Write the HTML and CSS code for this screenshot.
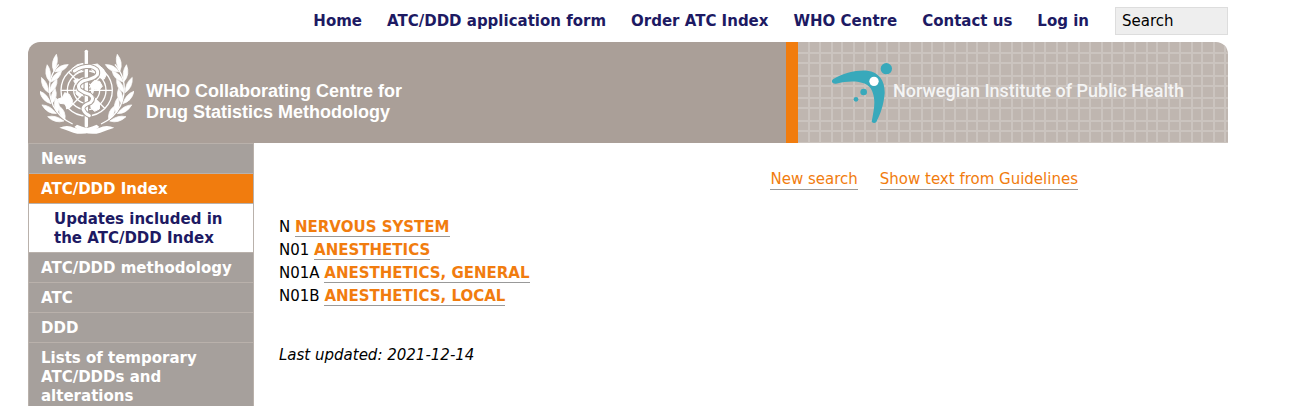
FILE: index.html
```html
<!DOCTYPE html>
<html lang="en">
<head>
<meta charset="utf-8">
<title>ATC/DDD Index</title>
<link rel="stylesheet" href="styles.css">
</head>
<body>
<div class="page">
  <div class="topbar">
    <nav class="topnav" aria-label="Main">
      <a href="#">Home</a>
      <a href="#">ATC/DDD application form</a>
      <a href="#">Order ATC Index</a>
      <a href="#">WHO Centre</a>
      <a href="#">Contact us</a>
      <a href="#">Log in</a>
    </nav>
    <input class="search" type="text" value="Search" aria-label="Search">
  </div>

  <header class="banner">
    <div class="banner-who">
      <svg class="emblem" viewBox="60 36 282 264" fill="none" stroke="#fff" aria-hidden="true">
        <defs>
          <g id="leaf" fill="#fff" stroke="#fff" stroke-width="2">
            <path d="M86 174Q62 160 63 129Q84 143 86 174Z"/>
            <path d="M90 174Q88 148 110 133Q113 160 90 174Z"/>
          </g>
          <g id="branch">
            <use href="#leaf" transform="rotate(36 200 163)"/>
            <use href="#leaf" transform="rotate(19 200 163)"/>
            <use href="#leaf" transform="rotate(2 200 163)"/>
            <use href="#leaf" transform="rotate(-15 200 163)"/>
            <use href="#leaf" transform="rotate(-32 200 163)"/>
            <use href="#leaf" transform="rotate(-48 200 163)"/>
            <path d="M116 85Q70 140 100 210Q118 246 158 264" stroke-width="4"/>
            <path d="M118 275Q142 264 164 276Q190 284 230 266L238 273Q200 302 160 290Q140 282 118 275Z" fill="#fff" stroke="none"/>
          </g>
        </defs>
        <use href="#branch"/>
        <use href="#branch" transform="matrix(-1 0 0 1 401 0)"/>
        <g stroke-width="4">
          <circle cx="200" cy="163" r="77"/>
          <circle cx="200" cy="163" r="58"/>
          <circle cx="200" cy="163" r="39"/>
          <circle cx="200" cy="163" r="20"/>
          <path d="M123 163H277M146 109L254 217M254 109L146 217"/>
        </g>
        <g fill="#fff" stroke-width="3">
          <path d="M156 98L172 86L190 82V94L183 106L166 112L155 106Z"/>
          <path d="M161 134L171 128L185 134L192 152L184 160L177 149L168 146Z"/>
          <path d="M112 190L128 184L134 170L148 175L158 194L151 212L140 219L137 204L119 202Z"/>
          <path d="M169 158L185 156L188 172L180 184L168 174Z"/>
          <path d="M212 145L222 134L239 136L247 151L236 163L223 160L215 171Z"/>
          <path d="M211 192L226 190L239 203L238 219L224 226L213 216Z"/>
          <path d="M211 88L232 84L250 99L259 116L252 130L238 124L231 111L217 105Z"/>
        </g>
        <path d="M199 42V273" stroke="#aaa099" stroke-width="17"/>
        <path d="M199 46V270" stroke-width="10" stroke-linecap="round"/>
        <g stroke-linecap="round" stroke-linejoin="round">
          <path d="M163 105Q182 91 211 91Q238 98 232 116Q223 128 191 134Q168 145 179 161Q190 170 210 176Q225 187 211 200Q187 209 189 220Q194 233 208 239" stroke="#aaa099" stroke-width="15"/>
          <path d="M163 105Q182 91 211 91Q238 98 232 116Q223 128 191 134Q168 145 179 161Q190 170 210 176Q225 187 211 200Q187 209 189 220Q194 233 208 239" stroke-width="9"/>
        </g>
      </svg>
      <div class="who-name">WHO Collaborating Centre for<br>Drug Statistics Methodology</div>
    </div>
    <div class="banner-niph">
      <svg class="grid" aria-hidden="true">
        <defs>
          <pattern id="squares" width="45" height="45" patternUnits="userSpaceOnUse">
            <path d="M0 11H45M0 21H45M0 34H45M0 44H45M11 0V45M22 0V45M34 0V45M44 0V45" stroke="#cbc4bf" stroke-width="2"/>
          </pattern>
        </defs>
        <rect width="100%" height="100%" fill="url(#squares)"/>
      </svg>
      <div class="niph">
        <svg class="figure" viewBox="184 78 186 186" aria-hidden="true">
          <g fill="#38a9bb">
            <circle cx="350" cy="98" r="17"/>
            <circle cx="282" cy="168" r="10"/>
            <circle cx="259" cy="190" r="7"/>
            <path d="M190 130C220 112 258 102 292 104C330 108 346 136 345 172C342 207 333 233 320 258Q313 264 306 257C312 224 320 194 307 164C294 134 246 132 199 143C188 144 183 136 190 130Z"/>
          </g>
          <circle cx="313" cy="136" r="14" fill="#fff"/>
        </svg>
        <span class="niph-name">Norwegian Institute of Public Health</span>
      </div>
    </div>
  </header>

  <div class="columns">
    <nav class="sidebar" aria-label="Section">
      <a href="#">News</a>
      <a class="active" href="#">ATC/DDD Index</a>
      <a class="sub" href="#">Updates included in the ATC/DDD Index</a>
      <a href="#">ATC/DDD methodology</a>
      <a href="#">ATC</a>
      <a href="#">DDD</a>
      <a href="#">Lists of temporary ATC/DDDs and alterations</a>
    </nav>
    <main class="content">
      <div class="actions">
        <a href="#">New search</a>
        <a href="#">Show text from Guidelines</a>
      </div>
      <ul class="codes">
        <li>N <a href="#">NERVOUS SYSTEM</a></li>
        <li>N01 <a href="#">ANESTHETICS</a></li>
        <li>N01A <a href="#">ANESTHETICS, GENERAL</a></li>
        <li>N01B <a href="#">ANESTHETICS, LOCAL</a></li>
      </ul>
      <p class="updated">Last updated: 2021-12-14</p>
    </main>
  </div>
</div>
</body>
</html>
```
FILE: styles.css
```css
* { box-sizing: border-box; }

body {
  margin: 0;
  background: #fff;
  color: #000;
  font: 15px/19px Verdana, "DejaVu Sans", sans-serif;
  overflow: hidden;
}

a { text-decoration: none; }

.page { padding: 7px 68px 0 28px; }

.topbar {
  display: flex;
  justify-content: flex-end;
  align-items: center;
  gap: 26px;
  margin-bottom: 7px;
}

.topnav {
  display: flex;
  gap: 25px;
  font-weight: bold;
  white-space: nowrap;
}

.topnav a { color: #1d1a63; }

.search {
  width: 113px;
  height: 28px;
  padding: 0 6px;
  border: 1px solid #ddd;
  border-radius: 0;
  background: #eee;
  color: #000;
  font: inherit;
}

.banner {
  display: flex;
  height: 101px;
  border-radius: 12px 12px 0 0;
  overflow: hidden;
}

.banner-who {
  flex: 1;
  display: flex;
  align-items: center;
  gap: 12px;
  padding: 0 0 2px 12px;
  background: #aa9f98;
}

.emblem {
  width: 94px;
  height: 88px;
}

.who-name {
  padding-top: 20px;
  color: #fff;
  font: bold 18px/21px "Liberation Sans", Arial, sans-serif;
}

.banner-niph {
  display: grid;
  width: 442px;
  border-left: 12px solid #f17c0e;
  background: #bfb6b0;
}

.grid, .niph { grid-area: 1 / 1; }

.grid {
  width: 100%;
  height: 100%;
}

.niph {
  display: flex;
  align-items: center;
  padding-left: 33px;
  color: #f4f4f4;
  font: 500 18px/24px Roboto, sans-serif;
  white-space: nowrap;
}

.niph-name { padding-bottom: 4px; }

.figure {
  width: 62px;
  height: 62px;
}

.columns {
  display: flex;
  align-items: flex-start;
}

.sidebar {
  width: 226px;
  border: 1px solid #b9b1ab;
  font-weight: bold;
}

.sidebar a {
  display: block;
  padding: 6px 12px 4px;
  border-bottom: 1px solid #b9b1ab;
  background: #a6a09c;
  color: #fff;
}

.sidebar .active { background: #f17c0e; }

.sidebar .sub {
  padding-left: 25px;
  background: #fff;
  color: #1d1a63;
}

.content {
  flex: 1;
  padding: 27px 25px 0;
}

.actions {
  display: flex;
  justify-content: flex-end;
  gap: 22px;
  margin-right: 125px;
}

.content a {
  border-bottom: 1px solid #999;
  color: #f17c0e;
}

.codes {
  margin: 26px 0 0;
  padding: 0;
  list-style: none;
  line-height: 23px;
}

.codes a { font-weight: bold; }

.updated {
  margin: 38px 0 0;
  font-style: italic;
}
```
